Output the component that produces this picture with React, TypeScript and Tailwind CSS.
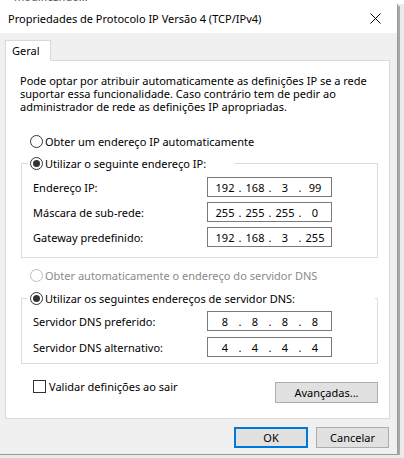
import React from "react";

const font = "font-['Noto_Sans',sans-serif]";

function Radio({ checked, disabled }: { checked?: boolean; disabled?: boolean }) {
  return (
    <span
      className={`flex h-[13px] w-[13px] shrink-0 items-center justify-center rounded-full border bg-white ${
        disabled ? "border-[#bcbcbc]" : "border-[#333333]"
      }`}
    >
      {checked && <span className="h-[7px] w-[7px] rounded-full bg-[#333333]" />}
    </span>
  );
}

function IpBox({ parts }: { parts: string[] }) {
  return (
    <div className="flex h-[20px] w-[125px] items-center border border-[#7a7a7a] bg-white pl-[5px]">
      {parts.map((p, i) => (
        <React.Fragment key={i}>
          {i > 0 && <span className="w-[6px] text-center">.</span>}
          <span className="w-[24px] text-center">{p}</span>
        </React.Fragment>
      ))}
    </div>
  );
}

function Row({ label, parts }: { label: string; parts: string[] }) {
  return (
    <div className="grid grid-cols-[174px_125px] items-center">
      <span>{label}</span>
      <IpBox parts={parts} />
    </div>
  );
}

function GroupBox({
  legend,
  gapRight,
  rows,
  top,
  bottom,
  gap,
}: {
  legend: string;
  gapRight: string;
  rows: { label: string; parts: string[] }[];
  top: string;
  bottom: string;
  gap: string;
}) {
  return (
    <div className={`border border-[#dcdcdc] ${bottom}`}>
      <div className={`-mt-[7px] ml-[6px] flex h-[13px] w-fit items-center gap-[2px] bg-white pl-[2px] ${gapRight}`}>
        <Radio checked />
        <span>{legend}</span>
      </div>
      <div className={`flex flex-col pl-[11px] ${gap} ${top}`}>
        {rows.map((r) => (
          <Row key={r.label} label={r.label} parts={r.parts} />
        ))}
      </div>
    </div>
  );
}

export default function App() {
  return (
    <div className={`h-[458px] w-[404px] overflow-hidden bg-[#ebebeb] text-[11px] leading-[13px] text-black ${font}`}>
      {/* window behind, barely visible */}
      <div className="h-[4px] overflow-hidden bg-white">
        <div className="-mt-[10px] ml-[14px] text-[#555]">modificando...</div>
      </div>

      <div className="flex">
        <div className="w-[398px] border-r border-b border-[#9a9a9a] bg-[#f0f0f0]">
          {/* Title bar */}
          <div className="flex h-[29px] items-center justify-between bg-white pl-[8px] pr-[16px]">
            <span className="text-[11px]">Propriedades de Protocolo IP Versão 4 (TCP/IPv4)</span>
            <svg width="11" height="11" viewBox="0 0 11 11" className="text-black">
              <path d="M0.5 0.5 L10.5 10.5 M10.5 0.5 L0.5 10.5" stroke="currentColor" strokeWidth="1" />
            </svg>
          </div>

          <div className="px-[5px] pt-[7px]">
            {/* Tab */}
            <div className="flex">
              <div className="relative z-10 -mb-px flex h-[21px] w-[46px] items-center border border-b-white border-[#d9d9d9] bg-white pl-[6px]">
                Geral
              </div>
            </div>

            {/* Panel */}
            <div className="w-[385px] border border-[#d9d9d9] bg-white pb-[15px] pl-[15px] pr-[11px] pt-[13px]">
              <p className="-ml-px">
                Pode optar por atribuir automaticamente as definições IP se a rede
                <br />
                suportar essa funcionalidade. Caso contrário tem de pedir ao
                <br />
                administrador de rede as definições IP apropriadas.
              </p>

              <div className="mt-[22px] ml-[9px] flex h-[13px] items-center gap-[2px]">
                <Radio />
                <span>Obter um endereço IP automaticamente</span>
              </div>

              <div className="mt-[15px]">
                <GroupBox
                  legend="Utilizar o seguinte endereço IP:"
                  gapRight="pr-[28px]"
                  top="pt-[7px]"
                  bottom="pb-[10px]"
                  gap="gap-[5px]"
                  rows={[
                    { label: "Endereço IP:", parts: ["192", "168", "3", "99"] },
                    { label: "Máscara de sub-rede:", parts: ["255", "255", "255", "0"] },
                    { label: "Gateway predefinido:", parts: ["192", "168", "3", "255"] },
                  ]}
                />
              </div>

              <div className="mt-[11px] ml-[9px] flex h-[13px] items-center gap-[2px] text-[#8a8a8a]">
                <Radio disabled />
                <span>Obter automaticamente o endereço do servidor DNS</span>
              </div>

              <div className="mt-[16px]">
                <GroupBox
                  legend="Utilizar os seguintes endereços de servidor DNS:"
                  gapRight="pr-[80px]"
                  top="pt-[6px]"
                  bottom="pb-[6px]"
                  gap="gap-[6px]"
                  rows={[
                    { label: "Servidor DNS preferido:", parts: ["8", "8", "8", "8"] },
                    { label: "Servidor DNS alternativo:", parts: ["4", "4", "4", "4"] },
                  ]}
                />
              </div>

              <div className="mt-[16px] flex items-start justify-between">
                <div className="ml-[12px] flex h-[13px] items-center gap-[3px]">
                  <span className="h-[13px] w-[13px] border border-[#333333] bg-white" />
                  <span>Validar definições ao sair</span>
                </div>
                <button className="mt-[2px] h-[21px] w-[103px] border border-[#adadad] bg-[#e1e1e1]">
                  Avançadas...
                </button>
              </div>
            </div>

            {/* Footer */}
            <div className="flex justify-end gap-[8px] pb-[6px] pt-[8px] pr-[3px]">
              <button className="h-[21px] w-[74px] border-2 border-[#0078d7] bg-[#e1e1e1]">OK</button>
              <button className="h-[21px] w-[73px] border border-[#adadad] bg-[#e1e1e1]">Cancelar</button>
            </div>
          </div>
        </div>
        <div className="mt-[2px] w-[2px] bg-[#a8a8a8]" />
      </div>
    </div>
  );
}
